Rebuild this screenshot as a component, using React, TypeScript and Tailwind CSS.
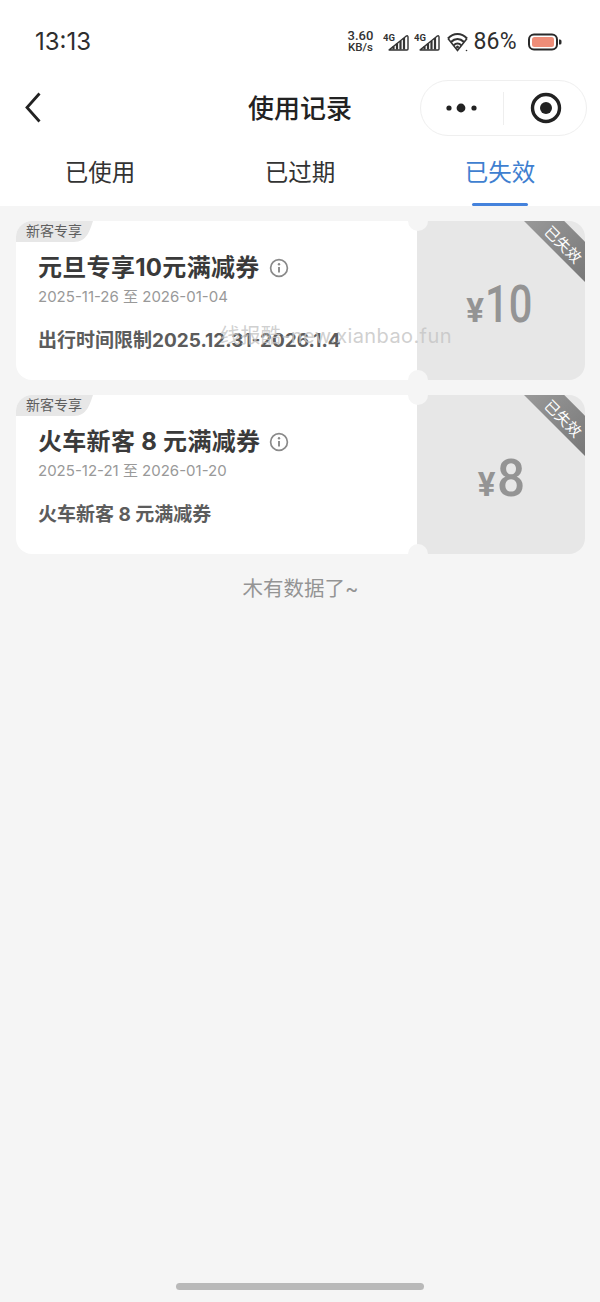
const SANS = "font-['Inter','Noto_Sans_CJK_SC',sans-serif]";

function Signal() {
  return (
    <svg width="26" height="20" viewBox="0 0 26 20" className="block">
      <text x="0" y="8.5" fontSize="9.5" fontWeight="700" fill="#333" fontFamily="Roboto, sans-serif">4G</text>
      <path d="M6.5 17.6 L23 4.2 Q25 3 25 5 V17 Q25 18 24 18 H7 Q5.5 18 6.5 17.6 Z" fill="none" stroke="#333" strokeWidth="1.4" />
      <path d="M10.5 17.5 V14.5 M14 17.5 V11.5 M17.5 17.5 V9 M21 17.5 V6" stroke="#333" strokeWidth="2.2" />
    </svg>
  );
}

function Wifi() {
  return (
    <svg width="21" height="20" viewBox="0 0 21 20" className="block">
      <path d="M1 6.5 C6.5 0.5 14.5 0.5 20 6.5" fill="none" stroke="#333" strokeWidth="2.2" />
      <path d="M4 10 C8 6 13 6 17 10" fill="none" stroke="#333" strokeWidth="2.2" />
      <path d="M6.8 13.2 C9 11 12 11 14.2 13.2" fill="none" stroke="#333" strokeWidth="2" />
      <path d="M1 6.5 L10.5 18.5 L20 6.5" fill="none" stroke="#333" strokeWidth="1.6" />
      <circle cx="10.5" cy="15" r="1.5" fill="#333" />
      <circle cx="19.5" cy="18.5" r="0.8" fill="#333" />
    </svg>
  );
}

function Battery() {
  return (
    <svg width="34" height="18" viewBox="0 0 34 18" className="block">
      <rect x="1" y="1.5" width="28" height="15" rx="5" fill="none" stroke="#2a2a2a" strokeWidth="2" />
      <rect x="4" y="4" width="22" height="10" rx="2.5" fill="#ee8d78" />
      <path d="M31 6.5 h1 a1.5 1.5 0 0 1 1.5 1.5 v2 a1.5 1.5 0 0 1 -1.5 1.5 h-1 z" fill="#2a2a2a" />
    </svg>
  );
}

function InfoIcon() {
  return (
    <svg width="20" height="20" viewBox="0 0 20 20" className="block">
      <circle cx="10" cy="10" r="8.4" fill="none" stroke="#8a8a8a" strokeWidth="1.7" />
      <circle cx="10" cy="6.2" r="1.2" fill="#8a8a8a" />
      <path d="M10 9 V14.5" stroke="#8a8a8a" strokeWidth="1.9" />
    </svg>
  );
}

function TagShape() {
  return (
    <svg width="77" height="21" viewBox="0 0 77 21" className="absolute left-0 top-0">
      <path d="M0 0 H77 C74 9 71 21 58 21 H0 Z" fill="#e7e7e7" />
    </svg>
  );
}

function Coupon({ title, date, desc, price }: { title: string; date: string; desc: string; price: string }) {
  return (
    <div className="relative flex h-[159px] overflow-hidden rounded-[16px]">
      <div className="relative flex-1 bg-white pl-[22px]">
        <TagShape />
        <div className="absolute left-[10px] top-0 flex h-[20px] items-center text-[14px] leading-none text-[#5e5e5e]">
          新客专享
        </div>
        <div className="mt-[31px] flex h-[32px] items-center gap-[9px]">
          <span className="text-[24px] font-bold leading-[32px] tracking-[0.3px] text-[#3a3a3a]">{title}</span>
          <InfoIcon />
        </div>
        <div className="mt-[2px] text-[15px] leading-[22px] text-[#999999]">{date}</div>
        <div className="mt-[20px] text-[19px] font-bold leading-[26px] text-[#5c5c5c]">{desc}</div>
      </div>
      <div className="relative flex w-[168px] items-center justify-center bg-[#e7e7e7] pt-[8px]">
        <div className="ml-[2px] flex items-baseline font-['Roboto','Noto_Sans_CJK_SC',sans-serif] text-[#949494]">
          <span className="text-[33px] font-bold leading-none">¥</span>
          {price === "8" ? (
            <span className="ml-[1px] inline-block origin-left scale-x-[0.95] text-[52px] font-medium leading-none">{price}</span>
          ) : (
            <span className="ml-[1px] inline-block origin-left scale-x-[0.8] text-[52px] font-medium leading-none [margin-right:-0.12em]">{price}</span>
          )}
        </div>
        <div className="absolute right-0 top-0 h-[61px] w-[61px] bg-gradient-to-br from-[#999999] to-[#787878] [clip-path:polygon(0_0,66%_0,100%_34%,100%_100%)]" />
        <div className="absolute right-[-1px] top-[16px] w-[46px] rotate-45 whitespace-nowrap text-center text-[15px] leading-none text-white">已失效</div>
      </div>
      <div className="absolute left-[392px] top-[-10px] h-[20px] w-[20px] rounded-full bg-[#f5f5f5]" />
      <div className="absolute bottom-[-10px] left-[392px] h-[20px] w-[20px] rounded-full bg-[#f5f5f5]" />
    </div>
  );
}

export default function App() {
  return (
    <div className={`relative flex h-[1302px] w-[600px] flex-col overflow-hidden bg-[#f5f5f5] ${SANS}`}>
      <div className="bg-white">
        {/* status bar */}
        <div className="flex h-[80px] items-center justify-between pl-[35px] pr-[38px] pt-[3px] text-[#2e2e2e]">
          <span className="text-[24px] font-normal leading-none">13:13</span>
          <div className="flex items-center">
            <div className="flex flex-col items-center font-['Roboto',sans-serif] text-[11.5px] font-medium leading-[10.5px] text-[#333]">
              <span className="text-[13px]">3.60</span>
              <span>KB/s</span>
            </div>
            <div className="ml-[10px]"><Signal /></div>
            <div className="ml-[5px]"><Signal /></div>
            <div className="ml-[7px]"><Wifi /></div>
            <span className="ml-[5px] font-['Roboto',sans-serif] text-[23px] leading-none tracking-[0.3px]">86%</span>
            <div className="ml-[11px]"><Battery /></div>
          </div>
        </div>
        {/* nav bar */}
        <div className="relative flex h-[58px] items-center justify-center">
          <svg width="20" height="34" viewBox="0 0 20 34" className="absolute left-[24px] top-[11px]">
            <path d="M15.5 2.5 L3 16.5 L15.5 30.5" fill="none" stroke="#222" strokeWidth="2.8" />
          </svg>
          <span className="text-[26px] font-medium leading-none text-[#222]">使用记录</span>
          <div className="absolute left-[420px] top-0 flex h-[56px] w-[167px] items-center rounded-full border border-[#efefef]">
            <svg width="32" height="12" viewBox="0 0 32 12" className="ml-[25px]">
              <circle cx="3" cy="6" r="2.6" fill="#222" />
              <circle cx="15" cy="6" r="4.4" fill="#222" />
              <circle cx="28" cy="6" r="2.6" fill="#222" />
            </svg>
            <div className="ml-[25px] h-[33px] w-px bg-[#eeeeee]" />
            <svg width="32" height="32" viewBox="0 0 32 32" className="ml-[26px]">
              <circle cx="16" cy="16" r="13.5" fill="none" stroke="#222" strokeWidth="3.4" />
              <circle cx="16" cy="16" r="6" fill="#222" />
            </svg>
          </div>
        </div>
        {/* tabs */}
        <div className="flex h-[68px] items-start">
          {["已使用", "已过期", "已失效"].map((t, i) => (
            <div key={t} className="relative flex h-[68px] w-[200px] justify-center pt-[19px]">
              <span className={`text-[23.5px] leading-[32px] ${i === 2 ? "text-[#3f7fd0]" : "text-[#333333]"}`}>{t}</span>
              {i === 2 && <div className="absolute bottom-0 left-[72px] h-[3px] w-[56px] rounded-full bg-[#4482dc]" />}
            </div>
          ))}
        </div>
      </div>

      {/* list */}
      <div className="flex flex-1 flex-col gap-[15px] pl-[16px] pr-[15px] pt-[15px]">
        <Coupon title="元旦专享10元满减券" date="2025-11-26 至 2026-01-04" desc="出行时间限制2025.12.31-2026.1.4" price="10" />
        <Coupon title="火车新客 8 元满减券" date="2025-12-21 至 2026-01-20" desc="火车新客 8 元满减券" price="8" />
        <div className="mt-[6px] text-center text-[20.5px] leading-[28px] text-[#949494]">木有数据了~</div>
      </div>

      {/* watermark */}
      <div className="absolute left-[220px] top-[323px] text-[20px] leading-[26px] tracking-[0.4px] text-[#c4c4c4]/80">线报酷-new.xianbao.fun</div>

      {/* home indicator */}
      <div className="absolute bottom-[12px] left-[176px] h-[7px] w-[248px] rounded-full bg-[#b9b9b9]" />
    </div>
  );
}
